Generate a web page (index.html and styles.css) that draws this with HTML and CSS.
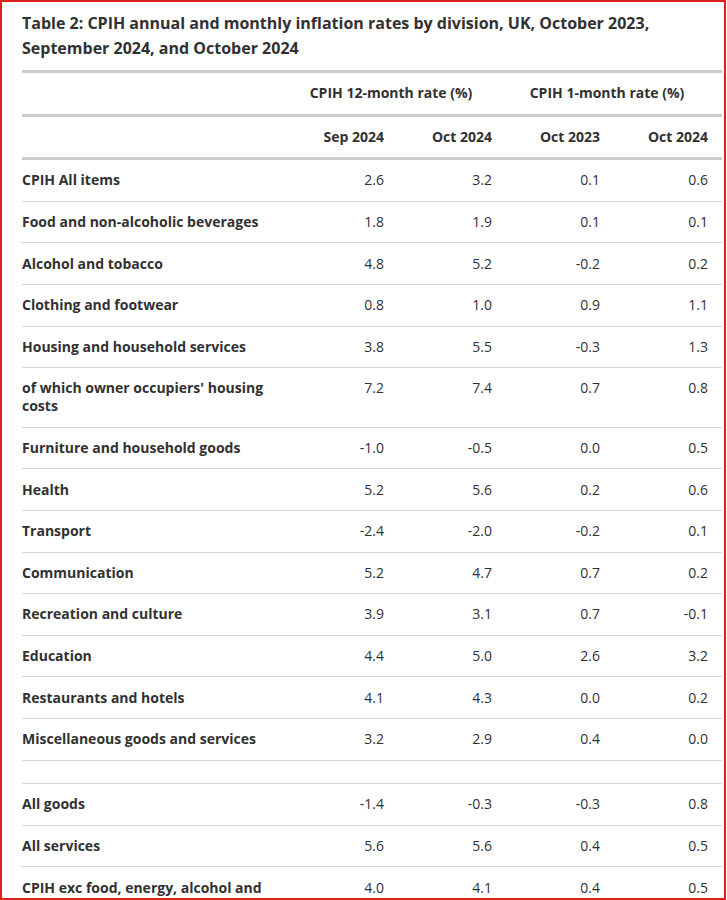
FILE: index.html
```html
<!DOCTYPE html>
<html lang="en">
<head>
<meta charset="utf-8">
<title>Table 2: CPIH annual and monthly inflation rates</title>
<link rel="stylesheet" href="styles.css">
</head>
<body>
<div class="frame">
  <h2 class="title">Table 2: CPIH annual and monthly inflation rates by division, UK, October 2023, September 2024, and October 2024</h2>
  <table class="data">
    <colgroup>
      <col class="c-label">
      <col class="c-num"><col class="c-num"><col class="c-num"><col class="c-num">
    </colgroup>
    <thead>
      <tr class="group">
        <th></th>
        <th colspan="2" class="center">CPIH 12-month rate (%)</th>
        <th colspan="2" class="center">CPIH 1-month rate (%)</th>
      </tr>
      <tr class="sub">
        <th></th>
        <th class="num">Sep 2024</th>
        <th class="num">Oct 2024</th>
        <th class="num">Oct 2023</th>
        <th class="num">Oct 2024</th>
      </tr>
    </thead>
    <tbody>
      <tr><th>CPIH All items</th><td>2.6</td><td>3.2</td><td>0.1</td><td>0.6</td></tr>
      <tr><th>Food and non-alcoholic beverages</th><td>1.8</td><td>1.9</td><td>0.1</td><td>0.1</td></tr>
      <tr><th>Alcohol and tobacco</th><td>4.8</td><td>5.2</td><td>-0.2</td><td>0.2</td></tr>
      <tr><th>Clothing and footwear</th><td>0.8</td><td>1.0</td><td>0.9</td><td>1.1</td></tr>
      <tr><th>Housing and household services</th><td>3.8</td><td>5.5</td><td>-0.3</td><td>1.3</td></tr>
      <tr><th>of which owner occupiers' housing costs</th><td>7.2</td><td>7.4</td><td>0.7</td><td>0.8</td></tr>
      <tr><th>Furniture and household goods</th><td>-1.0</td><td>-0.5</td><td>0.0</td><td>0.5</td></tr>
      <tr><th>Health</th><td>5.2</td><td>5.6</td><td>0.2</td><td>0.6</td></tr>
      <tr><th>Transport</th><td>-2.4</td><td>-2.0</td><td>-0.2</td><td>0.1</td></tr>
      <tr><th>Communication</th><td>5.2</td><td>4.7</td><td>0.7</td><td>0.2</td></tr>
      <tr><th>Recreation and culture</th><td>3.9</td><td>3.1</td><td>0.7</td><td>-0.1</td></tr>
      <tr><th>Education</th><td>4.4</td><td>5.0</td><td>2.6</td><td>3.2</td></tr>
      <tr><th>Restaurants and hotels</th><td>4.1</td><td>4.3</td><td>0.0</td><td>0.2</td></tr>
      <tr><th>Miscellaneous goods and services</th><td>3.2</td><td>2.9</td><td>0.4</td><td>0.0</td></tr>
      <tr class="empty"><th></th><td></td><td></td><td></td><td></td></tr>
      <tr><th>All goods</th><td>-1.4</td><td>-0.3</td><td>-0.3</td><td>0.8</td></tr>
      <tr><th>All services</th><td>5.6</td><td>5.6</td><td>0.4</td><td>0.5</td></tr>
      <tr><th>CPIH exc food, energy, alcohol and tobacco</th><td>4.0</td><td>4.1</td><td>0.4</td><td>0.5</td></tr>
    </tbody>
  </table>
</div>
</body>
</html>
```

FILE: styles.css
```css
html, body {
  margin: 0;
  padding: 0;
  background: #ffffff;
}

.frame {
  box-sizing: border-box;
  width: 726px;
  height: 900px;
  overflow: hidden;
  border: 2px solid #e0201c;
  padding: 0 2px 0 20px;
  font-family: "Open Sans", "Noto Sans", sans-serif;
  color: #323132;
}

.title {
  margin: 0;
  padding-top: 9px;
  font-size: 16px;
  font-weight: 700;
  line-height: 25px;
  color: #323132;
}

.data {
  margin-top: 9px;
  width: 700px;
  border-collapse: collapse;
  table-layout: fixed;
  font-size: 14px;
  line-height: 18px;
}

.c-label { width: 268px; }
.c-num { width: 108px; }

.data th,
.data td {
  padding: 11.3px 14px 11.3px 0;
  vertical-align: top;
}

.data thead tr {
  border-top: 3px solid #cccccc;
}

.data thead tr.sub {
  border-bottom: 3px solid #cccccc;
}

.data thead th {
  font-weight: 700;
}

.data th.center { text-align: center; }
.data th.num { text-align: right; }

.data tbody th {
  text-align: left;
  font-weight: 700;
}

.data tbody td {
  text-align: right;
  font-weight: 400;
}

.data tbody tr {
  border-bottom: 1px solid #d5d5d5;
}
```
